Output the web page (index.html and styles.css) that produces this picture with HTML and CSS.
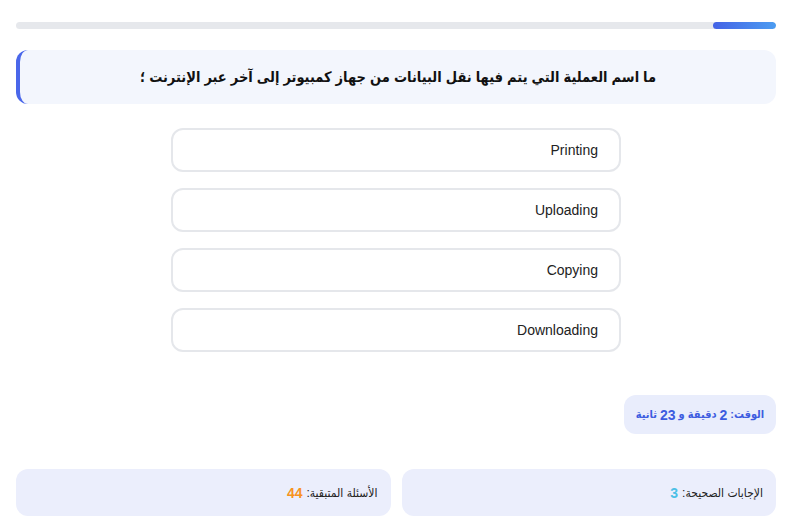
FILE: index.html
```html
<!DOCTYPE html>
<html lang="ar" dir="rtl">
<head>
<meta charset="utf-8">
<link rel="stylesheet" href="styles.css">
</head>
<body>
<div class="page">
  <div class="progress"><div class="progress-fill"></div></div>
  <div class="question">ما اسم العملية التي يتم فيها نقل البيانات من جهاز كمبيوتر إلى آخر عبر الإنترنت ؛</div>
  <div class="options">
    <div class="option" dir="ltr">Printing</div>
    <div class="option" dir="ltr">Uploading</div>
    <div class="option" dir="ltr">Copying</div>
    <div class="option" dir="ltr">Downloading</div>
  </div>
  <div class="timer-row">
    <div class="timer">الوقت: <b>2</b> دقيقة و <b>23</b> ثانية</div>
  </div>
  <div class="stats">
    <div class="stat">الإجابات الصحيحة: <b class="correct">3</b></div>
    <div class="stat">الأسئلة المتبقية: <b class="remaining">44</b></div>
  </div>
</div>
</body>
</html>
```
FILE: styles.css
```css
html, body {
  margin: 0;
  padding: 0;
  background: #ffffff;
}
body {
  font-family: "Liberation Sans", "DejaVu Sans Condensed", "DejaVu Sans", Arial, sans-serif;
  color: #1f2937;
}
.page {
  padding: 22px 13px 0 16px;
}
.progress {
  height: 7px;
  background: #e6e8ec;
  border-radius: 4px;
  display: flex;
  overflow: hidden;
}
.progress-fill {
  width: 63px;
  height: 100%;
  border-radius: 4px;
  background: linear-gradient(to left, #4c9cf1, #4463e6);
}
.question {
  margin-top: 21px;
  height: 54px;
  box-sizing: border-box;
  background: #f3f6fd;
  border-left: 4px solid #4a67ea;
  border-radius: 12px;
  display: flex;
  align-items: center;
  justify-content: center;
  font-weight: bold;
  font-size: 14.5px;
  color: #111;
}
.options {
  margin: 24px auto 0;
  width: 450px;
  display: flex;
  flex-direction: column;
  gap: 16px;
}
.option {
  height: 44px;
  box-sizing: border-box;
  border: 2px solid #e5e7eb;
  border-radius: 12px;
  display: flex;
  align-items: center;
  justify-content: flex-end;
  padding-right: 21px;
  font-size: 14px;
  color: #222;
}
.timer-row {
  margin-top: 43px;
  display: flex;
}
.timer {
  width: 152px;
  height: 39px;
  box-sizing: border-box;
  background: #e9edfc;
  border-radius: 12px;
  display: flex;
  align-items: center;
  justify-content: center;
  font-size: 11px;
  font-weight: bold;
  color: #3d5ce0;
  white-space: nowrap;
}
.timer b {
  font-size: 14px;
  margin: 0 3px;
}
.stats {
  margin-top: 35px;
  display: grid;
  grid-template-columns: 1fr 1fr;
  gap: 11px;
}
.stat {
  height: 47px;
  background: #ebeefc;
  border-radius: 12px;
  display: flex;
  align-items: center;
  padding-right: 13px;
  font-size: 12px;
  color: #222;
}
.stat b {
  font-size: 14px;
  margin-right: 4px;
}
.correct { color: #4cc0e6; }
.remaining { color: #f7931e; }
```
